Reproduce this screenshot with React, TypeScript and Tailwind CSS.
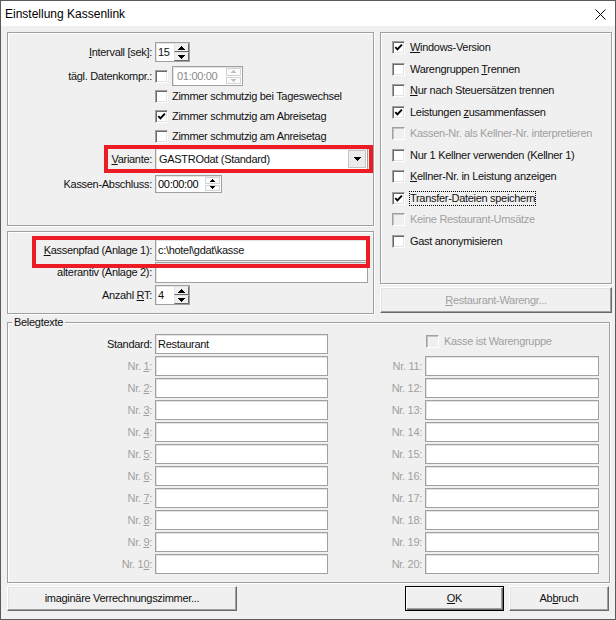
import React from "react";

const U = ({ children }: { children: React.ReactNode }) => (
  <span className="underline decoration-1 underline-offset-[1px]">{children}</span>
);

function Check() {
  return (
    <svg width="9" height="9" viewBox="0 0 9 9">
      <path d="M1.3 4.2 L3.4 6.4 L7.9 1.6" fill="none" stroke="#000" strokeWidth="1.9" />
    </svg>
  );
}

function CB({ checked = false, disabled = false }: { checked?: boolean; disabled?: boolean }) {
  return (
    <span
      className={
        disabled
          ? "flex h-[13px] w-[13px] shrink-0 items-center justify-center border border-t-[#a0a0a0] border-l-[#a0a0a0] border-r-white border-b-white bg-[#f0f0f0] shadow-[inset_1px_1px_0_#c4c4c4]"
          : "flex h-[13px] w-[13px] shrink-0 items-center justify-center border border-t-[#a0a0a0] border-l-[#a0a0a0] border-r-white border-b-white bg-white shadow-[inset_1px_1px_0_#696969,inset_-1px_-1px_0_#e3e3e3]"
      }
    >
      {checked && <Check />}
    </span>
  );
}

function Tri({ up, w, h, color }: { up: boolean; w: number; h: number; color: string }) {
  return (
    <svg width={w} height={h} viewBox={`0 0 ${w} ${h}`} shapeRendering="crispEdges">
      <polygon points={up ? `0,${h} ${w / 2},0 ${w},${h}` : `0,0 ${w},0 ${w / 2},${h}`} fill={color} />
    </svg>
  );
}

function BigSpin({ value }: { value: string }) {
  return (
    <div className="flex h-[20px] w-[35px] border border-[#a0a0a0] bg-white shadow-[inset_1px_1px_0_#e3e3e3]">
      <span className="flex-1 pl-[2px] leading-[18px]">{value}</span>
      <div className="flex w-[15px] flex-col">
        <span className="flex flex-1 items-center justify-center border border-t-[#e3e3e3] border-l-[#e3e3e3] border-r-[#696969] border-b-[#696969] bg-[#f0f0f0]">
          <Tri up w={7} h={4} color="#000" />
        </span>
        <span className="flex flex-1 items-center justify-center border border-t-[#e3e3e3] border-l-[#e3e3e3] border-r-[#696969] border-b-[#696969] bg-[#f0f0f0]">
          <Tri up={false} w={7} h={4} color="#000" />
        </span>
      </div>
    </div>
  );
}

function TimeField({ value, disabled = false }: { value: string; disabled?: boolean }) {
  return (
    <div
      className={
        disabled
          ? "flex h-[20px] w-[71px] border border-[#a0a0a0] bg-white shadow-[inset_1px_1px_0_#e3e3e3]"
          : "flex h-[18px] w-[67px] border border-[#a0a0a0] bg-white shadow-[inset_1px_1px_0_#e3e3e3]"
      }
    >
      <span
        className={
          disabled
            ? "flex flex-1 items-center pl-[4px] text-[#8a8a8a]"
            : "flex flex-1 items-center pl-[2px] text-black"
        }
      >
        {value}
      </span>
      <div className="flex w-[16px] flex-col gap-[1px] py-[1px] pr-[1px]">
        <span className="flex flex-1 items-center justify-center border border-[#d4d4d4] bg-[#fafafa]">
          <Tri up w={5} h={3} color={disabled ? "#bfbfbf" : "#000"} />
        </span>
        <span className="flex flex-1 items-center justify-center border border-[#d4d4d4] bg-[#fafafa]">
          <Tri up={false} w={5} h={3} color={disabled ? "#bfbfbf" : "#000"} />
        </span>
      </div>
    </div>
  );
}

function Field({ value = "", w, h = 20 }: { value?: string; w: number; h?: number }) {
  return (
    <div
      className="shrink-0 border border-[#a0a0a0] bg-white pl-[2px] shadow-[inset_1px_1px_0_#e3e3e3]"
      style={{ width: w, height: h, lineHeight: `${h - 2}px` }}
    >
      {value}
    </div>
  );
}

function Label({ children, gray = false }: { children: React.ReactNode; gray?: boolean }) {
  return (
    <div className={gray ? "w-[147px] shrink-0 pr-[3px] text-right text-[#a0a0a0]" : "w-[147px] shrink-0 pr-[3px] text-right"}>
      {children}
    </div>
  );
}

const rightChecks: { label: React.ReactNode; checked?: boolean; disabled?: boolean; focus?: boolean }[] = [
  { label: <><U>W</U>indows-Version</>, checked: true },
  { label: <>Warengruppen <U>T</U>rennen</> },
  { label: <><U>N</U>ur nach Steuersätzen trennen</> },
  { label: <>Leistungen <U>z</U>usammenfassen</>, checked: true },
  { label: <>Kassen-Nr. als Kellner-Nr. interpretieren</>, disabled: true },
  { label: <>Nur 1 Kellner verwenden (Kellner 1)</> },
  { label: <><U>K</U>ellner-Nr. in Leistung anzeigen</> },
  { label: <>Transfer-Dateien speichern</>, checked: true, focus: true },
  { label: <>Keine Restaurant-Umsätze</>, disabled: true },
  { label: <>Gast anonymisieren</> },
];

const groupBox = "border border-[#a0a0a0] shadow-[inset_1px_1px_0_#fff,1px_1px_0_#fff]";
const raised =
  "flex items-center justify-center border border-t-white border-l-white border-r-[#696969] border-b-[#696969] bg-[#f0f0f0] shadow-[inset_-1px_-1px_0_#a0a0a0,inset_1px_1px_0_#e3e3e3]";

export default function App() {
  const nums = Array.from({ length: 10 }, (_, i) => i + 1);
  return (
    <div className="relative flex h-[620px] w-[616px] flex-col border border-[#5b5b5b] bg-[#f0f0f0] font-['Liberation_Sans',Arial,sans-serif] text-[11px] leading-[13px] tracking-[-0.3px] text-[#111]">
      {/* Title bar */}
      <div className="flex h-[25px] shrink-0 items-center justify-between bg-white pl-[4px] pr-[9px] pt-[1px] text-[12px] tracking-normal text-black">
        <span>Einstellung Kassenlink</span>
        <svg width="11" height="11" viewBox="0 0 11 11">
          <path d="M0.5 0.5 L10.5 10.5 M10.5 0.5 L0.5 10.5" stroke="#000" strokeWidth="1" />
        </svg>
      </div>

      {/* Body */}
      <div className="flex flex-1 flex-col pl-[6px] pr-[3px] pt-[6px]">
        <div className="flex items-start gap-[6px]">
          {/* Left column */}
          <div className="flex w-[367px] flex-col gap-[5px]">
            <div className={`h-[194px] ${groupBox} flex flex-col pt-[9px]`}>
              <div className="flex h-[20px] items-center">
                <Label>
                  <U>I</U>ntervall [sek]:
                </Label>
                <BigSpin value="15" />
              </div>
              <div className="mt-[4px] flex h-[20px] items-center">
                <Label>tägl. Datenkompr.:</Label>
                <CB />
                <div className="ml-[4px]">
                  <TimeField value="01:00:00" disabled />
                </div>
              </div>
              <div className="flex h-[20px] items-center gap-[4px] pl-[147px]">
                <CB />
                <span>Zimmer schmutzig bei Tageswechsel</span>
              </div>
              <div className="flex h-[20px] items-center gap-[4px] pl-[147px]">
                <CB checked />
                <span>Zimmer schmutzig am Abreisetag</span>
              </div>
              <div className="flex h-[20px] items-center gap-[4px] pl-[147px]">
                <CB />
                <span>Zimmer schmutzig am Anreisetag</span>
              </div>
              <div className="mt-[2px] flex h-[22px] items-center">
                <Label>
                  <U>V</U>ariante:
                </Label>
                <div className="flex h-[22px] w-[213px] items-center border border-[#a0a0a0] bg-white p-[1px] shadow-[inset_1px_1px_0_#e3e3e3]">
                  <span className="flex-1 pl-[2px]">GASTROdat (Standard)</span>
                  <span className="flex h-full w-[18px] items-center justify-center border border-[#c4c4c4] bg-[#ececec]">
                    <Tri up={false} w={7} h={4} color="#000" />
                  </span>
                </div>
              </div>
              <div className="mt-[5px] flex h-[18px] items-center">
                <Label>Kassen-Abschluss:</Label>
                <TimeField value="00:00:00" />
              </div>
            </div>

            <div className={`h-[83px] ${groupBox} flex flex-col pt-[7px]`}>
              <div className="flex h-[22px] items-center">
                <Label>
                  <U>K</U>assenpfad (Anlage 1):
                </Label>
                <Field value="c:\hotel\gdat\kasse" w={213} h={22} />
              </div>
              <div className="mt-[1px] flex h-[21px] items-center">
                <Label>alterantiv (Anlage 2):</Label>
                <Field w={213} h={21} />
              </div>
              <div className="mt-[2px] flex h-[20px] items-center">
                <Label>
                  Anzahl <U>R</U>T:
                </Label>
                <BigSpin value="4" />
              </div>
            </div>
          </div>

          {/* Right column */}
          <div className="flex w-[232px] flex-col gap-[3px]">
            <div className={`h-[252px] ${groupBox} flex flex-col pt-[4px]`}>
              {rightChecks.map((c, i) => (
                <div key={i} className="flex h-[21.5px] items-center gap-[5px] pl-[11px]">
                  <CB checked={c.checked} disabled={c.disabled} />
                  <span
                    className={
                      c.disabled
                        ? "text-[#a0a0a0]"
                        : c.focus
                        ? "outline-1 outline-dotted outline-black"
                        : ""
                    }
                  >
                    {c.label}
                  </span>
                </div>
              ))}
            </div>
            <div className={`h-[26px] ${raised} text-[#a0a0a0]`}>
              <span>
                <U>R</U>estaurant-Warengr...
              </span>
            </div>
          </div>
        </div>

        {/* Belegtexte */}
        <div className={`relative mt-[8px] h-[261px] w-[603px] ${groupBox} flex flex-col gap-[2px] pt-[11px]`}>
          <span className="absolute left-[4px] top-[-7px] bg-[#f0f0f0] px-[2px]">Belegtexte</span>
          <div className="flex h-[20px] items-center">
            <Label>Standard:</Label>
            <Field value="Restaurant" w={173} />
            <div className="w-[97px] shrink-0" />
            <div className="ml-[1px] flex items-center gap-[5px] self-start pt-[1px] text-[#a0a0a0]">
              <CB disabled />
              <span>Kasse ist Warengruppe</span>
            </div>
          </div>
          {nums.map((n) => (
            <div key={n} className="flex h-[20px] items-center">
              <Label gray>
                Nr.{" "}
                {n === 10 ? (
                  <>
                    1<U>0</U>
                  </>
                ) : (
                  <U>{n}</U>
                )}
                :
              </Label>
              <Field w={173} />
              <div className="w-[97px] shrink-0 pr-[3px] text-right text-[#a0a0a0]">Nr. {n + 10}:</div>
              <Field w={174} />
            </div>
          ))}
        </div>

        {/* Buttons */}
        <div className="mt-[3px] flex h-[25px] items-stretch pr-[3px]">
          <div className={`w-[230px] ${raised}`}>imaginäre Verrechnungszimmer...</div>
          <div className="ml-auto flex w-[99px] items-center justify-center border border-black bg-[#f0f0f0] shadow-[inset_1px_1px_0_#fff,inset_-1px_-1px_0_#696969,inset_-2px_-2px_0_#a0a0a0]">
            <span>
              <U>O</U>K
            </span>
          </div>
          <div className={`ml-[5px] w-[100px] ${raised}`}>
            <span>
              Ab<U>b</U>ruch
            </span>
          </div>
        </div>
      </div>

      {/* Red annotation boxes */}
      <div className="pointer-events-none absolute left-[103px] top-[144px] h-[28px] w-[269px] border-[4px] border-[#ed1c24]" />
      <div className="pointer-events-none absolute left-[31px] top-[235px] h-[32px] w-[338px] border-[4px] border-[#ed1c24]" />
    </div>
  );
}
